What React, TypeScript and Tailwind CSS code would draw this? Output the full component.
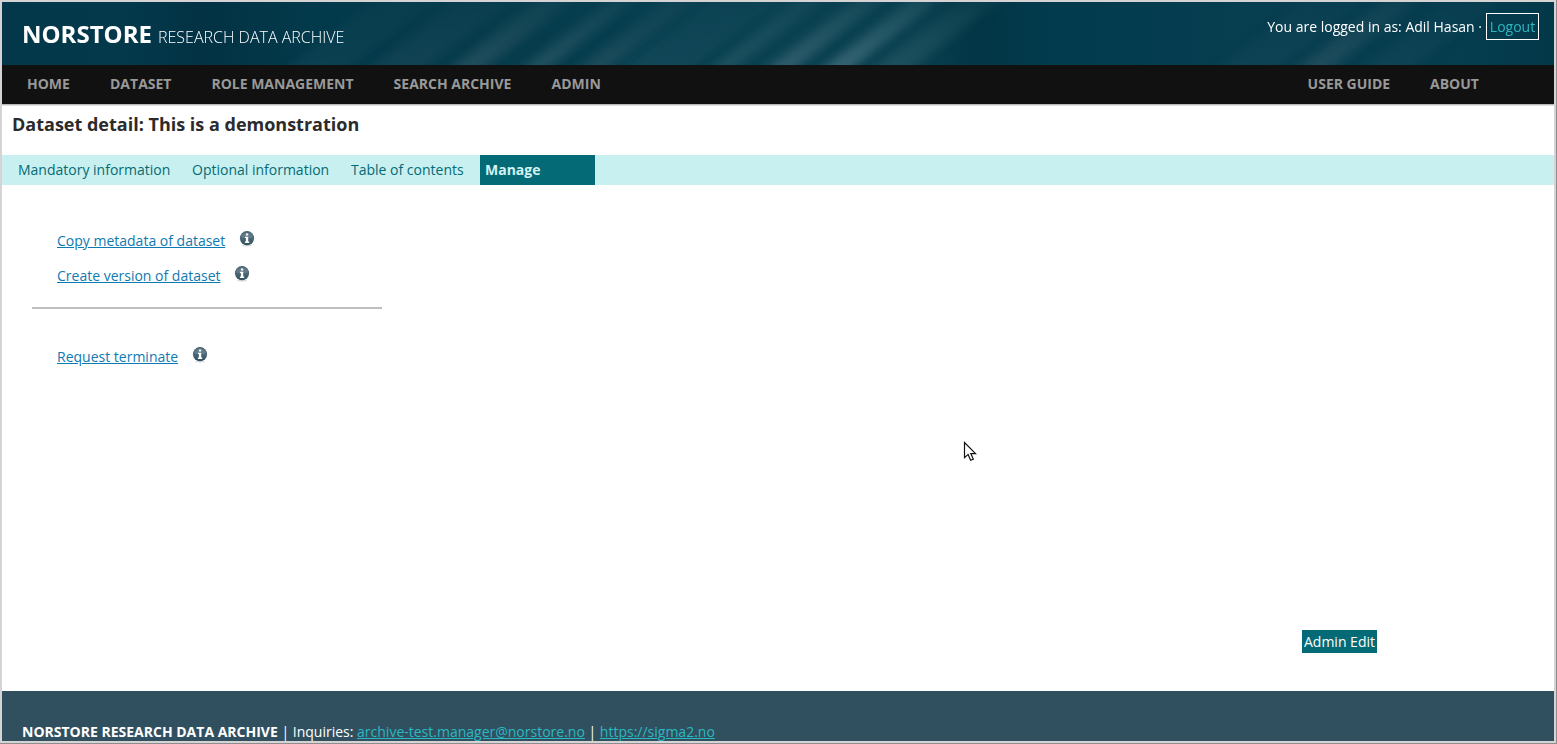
import React from "react";

const leftNav = [
  { label: "HOME", w: "w-[83px]" },
  { label: "DATASET", w: "w-[101.4px]" },
  { label: "ROLE MANAGEMENT", w: "w-[182.2px]" },
  { label: "SEARCH ARCHIVE", w: "w-[158px]" },
  { label: "ADMIN", w: "w-[90px]" },
];

const tabs = [
  { label: "Mandatory information", w: "w-[174px]" },
  { label: "Optional information", w: "w-[159px]" },
  { label: "Table of contents", w: "w-[129px]" },
];

// Diagonal light beams: x at the bottom edge, width, colour, opacity
const beams: [number, number, string, number][] = [
  [320, 60, "#17495a", 0.45],
  [400, 55, "#1d4c5b", 0.5],
  [470, 34, "#2a5563", 0.7],
  [538, 26, "#2a5866", 0.75],
  [597, 34, "#275362", 0.65],
  [660, 70, "#174c5c", 0.7],
  [725, 24, "#2b5b69", 0.65],
  [784, 28, "#376472", 0.8],
  [840, 30, "#3b6876", 0.9],
  [895, 40, "#2c5a66", 0.6],
  [1250, 60, "#17485a", 0.45],
  [1317, 34, "#2a5563", 0.65],
  [1390, 50, "#17495a", 0.5],
];

function Banner() {
  return (
    <svg className="absolute inset-0 h-full w-full" viewBox="0 0 1552 63" preserveAspectRatio="none" aria-hidden="true">
      <defs>
        <linearGradient id="base" x1="0" x2="1" y1="0" y2="0">
          <stop offset="0" stopColor="#023849" />
          <stop offset="0.08" stopColor="#03394b" />
          <stop offset="0.13" stopColor="#023244" />
          <stop offset="0.2" stopColor="#033a4b" />
          <stop offset="0.3" stopColor="#073c4c" />
          <stop offset="0.4" stopColor="#063e4f" />
          <stop offset="0.5" stopColor="#0b4252" />
          <stop offset="0.59" stopColor="#083f4f" />
          <stop offset="0.63" stopColor="#033646" />
          <stop offset="0.68" stopColor="#023b4e" />
          <stop offset="0.84" stopColor="#083e50" />
          <stop offset="0.95" stopColor="#053c4e" />
          <stop offset="1" stopColor="#033849" />
        </linearGradient>
        <linearGradient id="fade" x1="0" x2="0" y1="0" y2="1">
          <stop offset="0" stopColor="#fff" stopOpacity="0.35" />
          <stop offset="1" stopColor="#fff" stopOpacity="1" />
        </linearGradient>
        <mask id="beamMask">
          <rect width="1552" height="63" fill="url(#fade)" />
        </mask>
        <filter id="soft" x="-30%" y="-30%" width="160%" height="160%">
          <feGaussianBlur stdDeviation="7 3" />
        </filter>
      </defs>
      <rect width="1552" height="63" fill="url(#base)" />
      <g mask="url(#beamMask)">
        {beams.map(([x, w, c, o]) => (
          <polygon
            key={x}
            points={`${x - w / 2 - 16},75 ${x + w / 2 - 16},75 ${x + w / 2 + 95},-12 ${x - w / 2 + 95},-12`}
            fill={c}
            opacity={o}
            filter="url(#soft)"
          />
        ))}
      </g>
    </svg>
  );
}

function InfoIcon() {
  return (
    <svg width="16" height="16" viewBox="0 0 16 16" className="shrink-0" aria-hidden="true">
      <defs>
        <linearGradient id="ball" x1="0" x2="0" y1="0" y2="1">
          <stop offset="0" stopColor="#405b6a" />
          <stop offset="0.45" stopColor="#4f6b7a" />
          <stop offset="1" stopColor="#304d5c" />
        </linearGradient>
      </defs>
      <ellipse cx="8" cy="14.6" rx="5" ry="0.9" fill="#d5dce0" />
      <circle cx="8" cy="7.2" r="7.1" fill="url(#ball)" />
      <path d="M2 6A6.2 6.2 0 0 1 14 6Q8 8.5 2 6Z" fill="#8fa1aa" opacity="0.35" />
      <path d="M6.9 2.4h2.3v2H6.9zM6 5.7h3.2v4.9h1v1.4H5.9v-1.4h1V7.1H6z" fill="#fff" />
    </svg>
  );
}

function ActionLink({ label, w }: { label: string; w: string }) {
  return (
    <div className="flex h-5 items-start">
      <a href="#" className={`${w} shrink-0 leading-5 whitespace-nowrap text-[#0f7ab2] underline`}>
        {label}
      </a>
      <InfoIcon />
    </div>
  );
}

export default function App() {
  return (
    <div className="relative h-[744px] w-[1557px] overflow-hidden border-r border-b border-[#8d8d8d] bg-[#d5d3d3] p-0.5 font-['Open_Sans',sans-serif] text-sm leading-5">
      <div className="flex h-full w-full flex-col bg-white">
        <header className="relative h-[63px] shrink-0 overflow-hidden">
          <Banner />
          <div className="relative flex h-full items-start justify-between pr-[15px] pl-5">
            <div className="flex items-baseline pt-4 whitespace-nowrap text-white">
              <span className="w-[136px] text-2xl leading-8 font-bold">NORSTORE</span>
              <span className="text-base font-light">RESEARCH DATA ARCHIVE</span>
            </div>
            <div className="flex items-center gap-1 pt-[11px] whitespace-nowrap text-white">
              <span>You are logged in as: Adil Hasan ·</span>
              <a href="#" className="flex h-[27px] w-[53px] items-center justify-center border border-white text-[#2bb8c0]">
                Logout
              </a>
            </div>
          </div>
        </header>

        <nav className="flex h-[39px] shrink-0 justify-between bg-[#111111] pt-[9px] pl-[25px] font-bold whitespace-nowrap text-[#999999]">
          <div className="flex">
            {leftNav.map((n) => (
              <a key={n.label} href="#" className={n.w}>{n.label}</a>
            ))}
          </div>
          <div className="flex">
            <a href="#" className="w-[122.4px]">USER GUIDE</a>
            <a href="#" className="w-[124px]">ABOUT</a>
          </div>
        </nav>
        <div className="h-0.5 shrink-0 border-b border-[#e2e2e2] bg-[#b9b9b9]" />

        <h1 className="h-[49px] shrink-0 pt-1.5 pl-2.5 text-lg leading-6 font-bold text-[#2b2b2b]">
          Dataset detail: This is a demonstration
        </h1>

        <div className="flex h-[30px] shrink-0 items-center bg-[#c9f0f0] pl-4 whitespace-nowrap text-[#036b74]">
          {tabs.map((t) => (
            <a key={t.label} href="#" className={t.w}>{t.label}</a>
          ))}
          <div className="flex h-full w-[115px] items-center bg-[#046a75] pl-[5px] font-bold text-[#d2f3f3]">Manage</div>
        </div>

        <main className="flex grow flex-col pt-[46px]">
          <div className="flex flex-col gap-[15px] pl-[55px]">
            <ActionLink label="Copy metadata of dataset" w="w-[182px]" />
            <ActionLink label="Create version of dataset" w="w-[177px]" />
          </div>
          <div className="mt-[21px] ml-[30px] h-0.5 w-[350px] bg-[#bebebe]" />
          <div className="mt-[38px] pl-[55px]">
            <ActionLink label="Request terminate" w="w-[135px]" />
          </div>
          <div className="mt-auto mb-[38px] ml-[1300px] flex h-[23px] w-[75px] items-center justify-center bg-[#046a75] whitespace-nowrap text-white">
            Admin Edit
          </div>
        </main>

        <footer className="h-[50px] shrink-0 bg-[#305060] pt-[31px] pl-5 whitespace-nowrap text-white">
          <b>NORSTORE RESEARCH DATA ARCHIVE</b> | Inquiries:{" "}
          <a href="#" className="text-[#2bb8c0] underline">archive-test.manager@norstore.no</a> |{" "}
          <a href="#" className="text-[#2bb8c0] underline">https://sigma2.no</a>
        </footer>
      </div>

      <svg className="absolute top-[441px] left-[963px]" width="14" height="21" viewBox="0 0 14 21" aria-hidden="true">
        <path d="M1.5 1.5v15.2l3.6-3.3 2.5 5.9 2.7-1.2-2.5-5.5h4.7z" fill="#fff" stroke="#111" strokeWidth="1.2" />
      </svg>
    </div>
  );
}
